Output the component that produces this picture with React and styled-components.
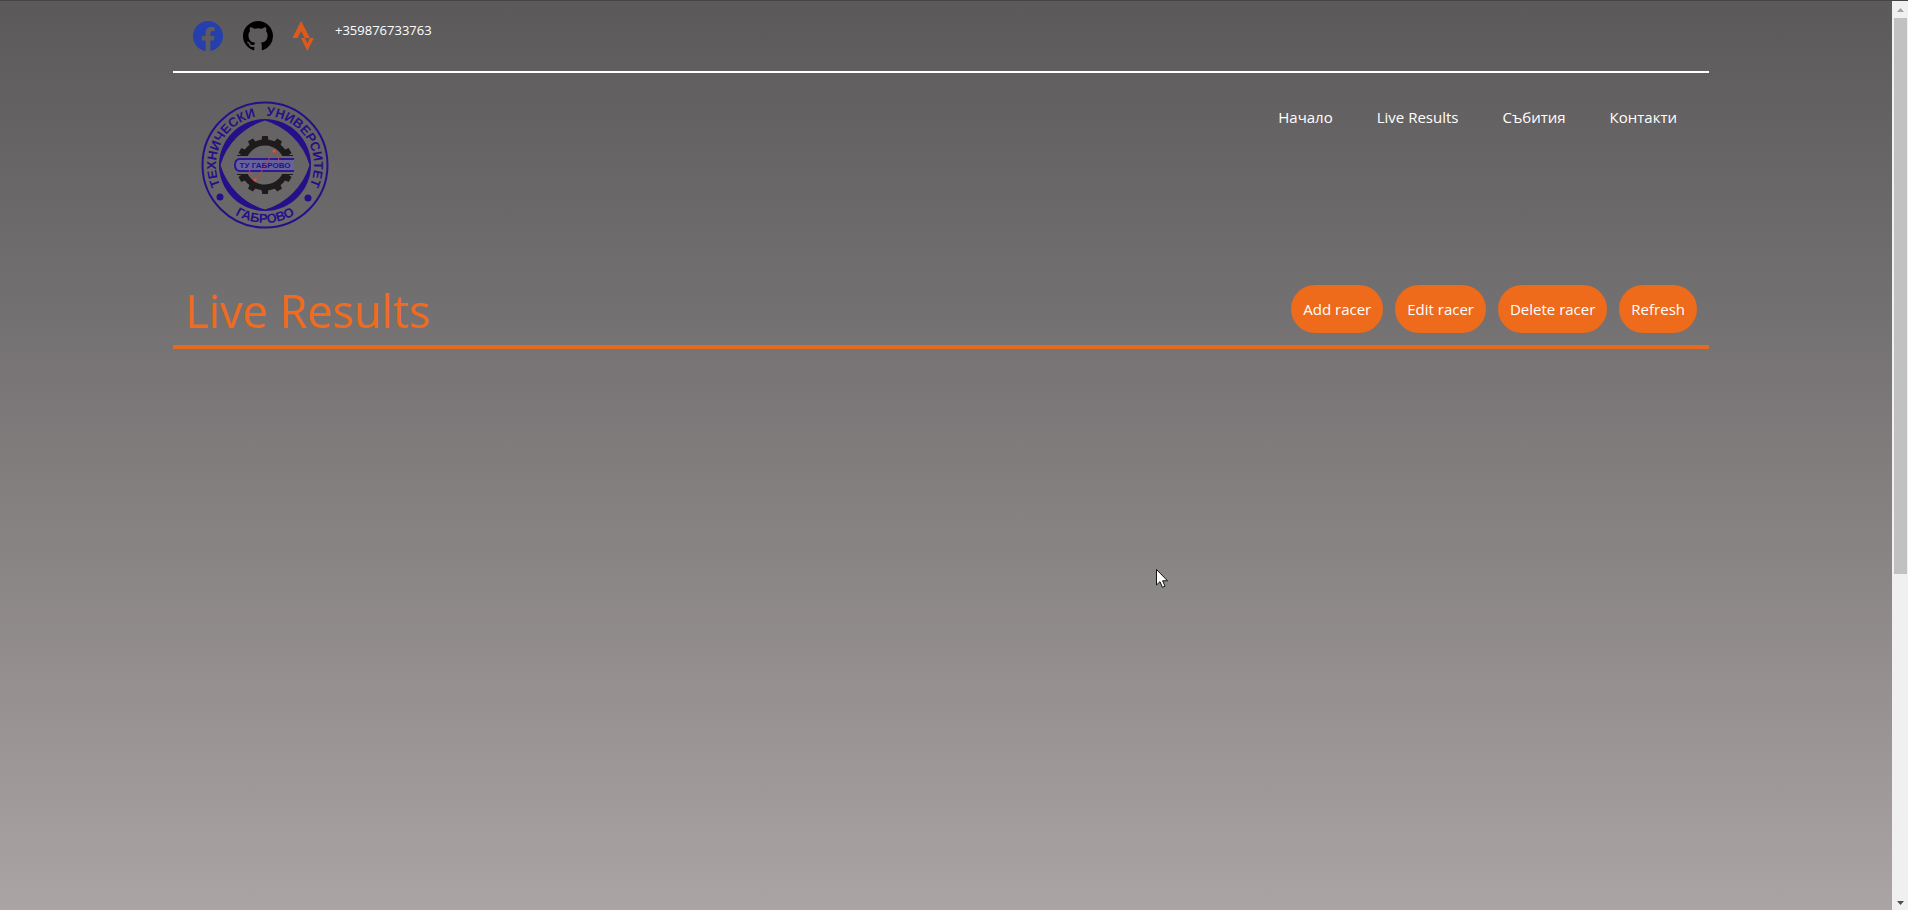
import React from "react";
import styled, { createGlobalStyle } from "styled-components";
import { BsFacebook, BsGithub } from "react-icons/bs";

const GlobalStyle = createGlobalStyle`
  * { box-sizing: border-box; }
  body {
    margin: 0;
    font-family: "Open Sans", "Noto Sans", sans-serif;
    font-size: 15px;
    line-height: 24px;
    color: #fff;
  }
`;

const Window = styled.div`
  display: flex;
  min-height: 100vh;
  position: relative;
`;

const Page = styled.div`
  flex: 1;
  padding: 0 183px 0 173px;
  border-top: 1px solid #454344;
  background: linear-gradient(#5b595a, #737071 34%, #8a8585 62%, #aaa5a4);
`;

const TopBar = styled.div`
  display: flex;
  gap: 20px;
  padding: 20px;
  border-bottom: 2px solid #fff;
`;

const SocialLink = styled.a`
  display: block;
  height: 30px;
  color: ${(p) => p.$color};

  svg {
    display: block;
    height: 30px;
  }
`;

const Phone = styled.a`
  color: #fff;
  font-size: 13px;
  line-height: 18px;
  text-decoration: none;
`;

const Header = styled.header`
  display: flex;
  justify-content: space-between;
  align-items: flex-start;
  padding: 28px 32px 28px 28px;
`;

const LogoLink = styled.a`
  display: block;

  svg {
    display: block;
  }
`;

const Nav = styled.nav`
  display: flex;
  gap: 44px;
  padding-top: 4px;
`;

const NavLink = styled.a`
  color: #fff;
  text-decoration: none;
`;

const TitleRow = styled.div`
  display: flex;
  justify-content: space-between;
  align-items: flex-end;
  padding: 28px 12px 12px;
  border-bottom: 4px solid #e5691f;
`;

const Title = styled.h1`
  margin: 0;
  color: #ee6b1f;
  font-size: 45px;
  font-weight: 400;
  line-height: 44px;
`;

const Actions = styled.div`
  display: flex;
  gap: 12px;
`;

const ActionButton = styled.button`
  padding: 12px;
  border: 0;
  border-radius: 25px;
  background: #ed6b1b;
  color: #fff;
  font: inherit;
`;

const ScrollTrack = styled.div`
  display: flex;
  flex-direction: column;
  align-items: center;
  width: 16px;
  height: 100vh;
  background: #f0f0f0;
  border-top: 1px solid #454344;
`;

const ScrollArrow = styled.svg`
  flex: none;
  width: 16px;
  height: 17px;
  fill: ${(p) => p.$color};
`;

const ScrollSpace = styled.div`
  flex: 1;
  width: 13px;
`;

const ScrollThumb = styled.div`
  height: 63.5%;
  background: #c1c1c1;
`;

const Cursor = styled.svg`
  position: absolute;
  left: 1156px;
  top: 569px;
`;

const TEETH = Array.from({ length: 12 }, (_, i) => i * 30);

function UniversityLogo() {
  return (
    <svg width="128" height="128" viewBox="-64 -64 128 128" role="img" aria-label="Технически университет Габрово">
      <defs>
        <path id="ring-top" d="M0 49A49 49 0 0 1 0 -49A49 49 0 0 1 0 49" />
        <path id="ring-bottom" d="M-58 0A58 58 0 0 0 58 0" />
      </defs>
      <circle r="62.5" fill="none" stroke="#26108a" strokeWidth="2" />
      <path
        fill="#26108a"
        fillRule="evenodd"
        d="M0 -46A46 46 0 0 1 0 46A46 46 0 0 1 0 -46ZM0 -44.5A66 66 0 0 1 44.5 0A66 66 0 0 1 0 44.5A66 66 0 0 1 -44.5 0A66 66 0 0 1 0 -44.5Z"
      />
      <g fill="#26108a" fontFamily="Liberation Sans, sans-serif" fontSize="13" fontWeight="700" textAnchor="middle">
        <text>
          <textPath href="#ring-top" startOffset="50%">{"ТЕХНИЧЕСКИ\u00a0\u00a0\u00a0УНИВЕРСИТЕТ"}</textPath>
        </text>
        <text>
          <textPath href="#ring-bottom" startOffset="50%">ГАБРОВО</textPath>
        </text>
      </g>
      <circle cx="-45" cy="32" r="3.5" fill="#26108a" />
      <circle cx="43" cy="33" r="3.5" fill="#26108a" />
      <clipPath id="gear-halves">
        <path d="M-30 -30H30V-9H-30ZM-30 9H30V30H-30Z" />
      </clipPath>
      <g clipPath="url(#gear-halves)">
        <circle r="22.5" fill="none" stroke="#1f1b1d" strokeWidth="6" />
        {TEETH.map((angle) => (
          <path key={angle} d="M-3.6 -24L-2.8 -29H2.8L3.6 -24Z" fill="#1f1b1d" transform={`rotate(${angle})`} />
        ))}
      </g>
      <path d="M-28 -9.5H-17M17 -9.5H28M-28 9.5H-17M17 9.5H28" stroke="#1f1b1d" />
      <path d="M29 -6H-26Q-30 -5 -30 0Q-30 5 -26 6H29" fill="#67639a" stroke="#2d1a92" strokeWidth="2" />
      <path d="M-16 4Q-12 21 -7 12L7 -11Q12 -19 14 -4" fill="none" stroke="#b34a52" strokeWidth="1" />
      <text y="3" fill="#26108a" fontFamily="Liberation Sans, sans-serif" fontSize="8" fontWeight="700" textAnchor="middle">
        ТУ ГАБРОВО
      </text>
      <circle cx="9" cy="-14" r="1.5" fill="#e2552b" />
      <circle cx="-10" cy="15" r="1.5" fill="#e2552b" />
    </svg>
  );
}

function StravaIcon() {
  return (
    <svg width="22" height="30" viewBox="2.4 0 11.7 16" fill="currentColor" aria-hidden="true">
      <path d="M6.731 0 2 9.125h2.788L6.73 5.497l1.93 3.628h2.766zm4.694 9.125-1.372 2.756L8.66 9.125H6.547L10.053 16l3.484-6.875z" overflow="visible" />
    </svg>
  );
}

const NAV_ITEMS = ["Начало", "Live Results", "Събития", "Контакти"];
const ACTIONS = ["Add racer", "Edit racer", "Delete racer", "Refresh"];

export default function App() {
  return (
    <Window>
      <GlobalStyle />
      <Page>
        <TopBar>
          <SocialLink href="#facebook" aria-label="Facebook" $color="#263fae">
            <BsFacebook size={30} />
          </SocialLink>
          <SocialLink href="#github" aria-label="GitHub" $color="#000">
            <BsGithub size={30} />
          </SocialLink>
          <SocialLink href="#strava" aria-label="Strava" $color="#dc5a1c">
            <StravaIcon />
          </SocialLink>
          <Phone href="tel:+359876733763">+359876733763</Phone>
        </TopBar>
        <Header>
          <LogoLink href="#home">
            <UniversityLogo />
          </LogoLink>
          <Nav>
            {NAV_ITEMS.map((item) => (
              <NavLink key={item} href="#">{item}</NavLink>
            ))}
          </Nav>
        </Header>
        <main>
          <TitleRow>
            <Title>Live Results</Title>
            <Actions>
              {ACTIONS.map((action) => (
                <ActionButton key={action} type="button">{action}</ActionButton>
              ))}
            </Actions>
          </TitleRow>
        </main>
      </Page>
      <ScrollTrack aria-hidden="true">
        <ScrollArrow $color="#a3a3a3" viewBox="0 0 16 17">
          <path d="M5 11L8.5 7L12 11Z" />
        </ScrollArrow>
        <ScrollSpace>
          <ScrollThumb />
        </ScrollSpace>
        <ScrollArrow $color="#505050" viewBox="0 0 16 17">
          <path d="M5 8L8.5 12L12 8Z" />
        </ScrollArrow>
      </ScrollTrack>
      <Cursor width="13" height="20" viewBox="0 0 13 20" aria-hidden="true">
        <path d="M.5 .5V16L4 12.7L6.4 18.3L9 17.2L6.6 11.8H11.5Z" fill="#fff" stroke="#111" />
      </Cursor>
    </Window>
  );
}
